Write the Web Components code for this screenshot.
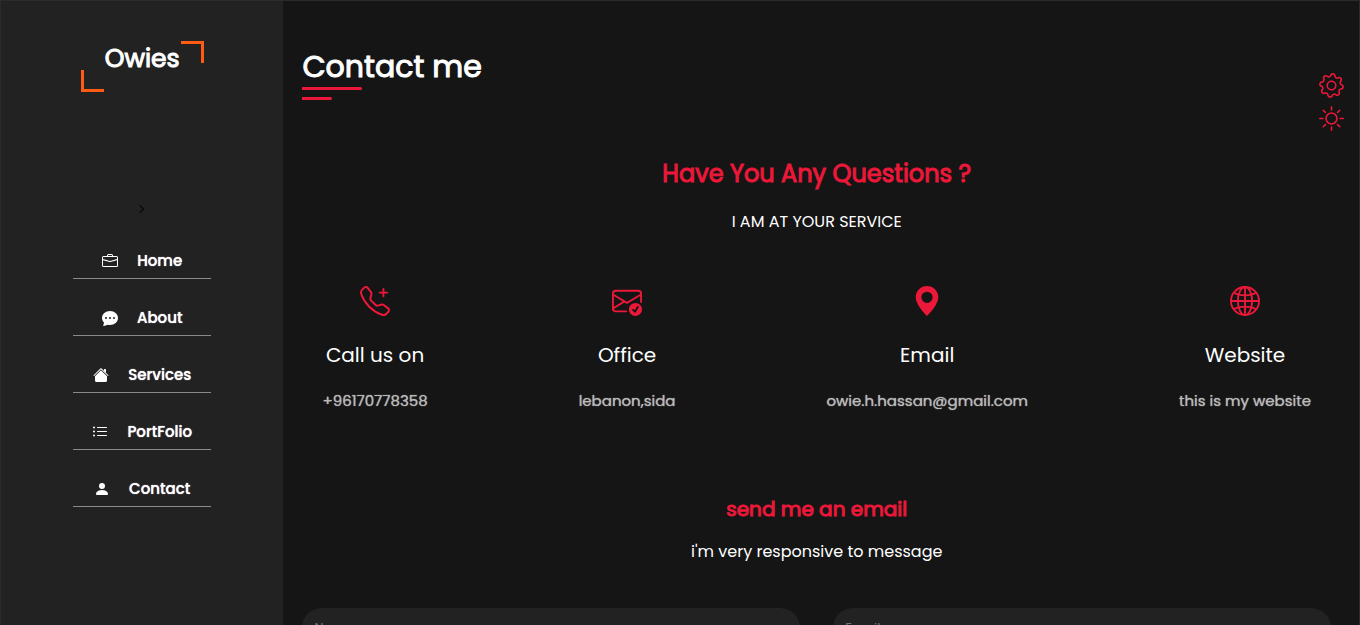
<!DOCTYPE html>
<html lang="en">
<head>
<meta charset="utf-8">
<meta name="viewport" content="width=device-width, initial-scale=1">
<title>Owies – Contact</title>
<style>
  html { scrollbar-width: none; }
  body {
    margin: 0;
    background: #151515;
    color: #fff;
    font-family: Poppins, Inter, sans-serif;
    --accent: #ec1839;
    --brand: #ff5b12;
    --panel: #222;
    --edge: #2b2b2b;
  }
</style>
</head>
<body>
<portfolio-page>
  <side-bar slot="side"></side-bar>
  <contact-section>
    <info-card icon="phone" heading="Call us on">+96170778358</info-card>
    <info-card icon="mail" heading="Office">lebanon,sida</info-card>
    <info-card icon="pin" heading="Email">owie.h.hassan@gmail.com</info-card>
    <info-card icon="globe" heading="Website">this is my website</info-card>
  </contact-section>
  <theme-tools slot="tools"></theme-tools>
</portfolio-page>

<script>
const ICONS = {
  briefcase: '<path d="M6.5 1A1.5 1.5 0 0 0 5 2.5V3H1.5A1.5 1.5 0 0 0 0 4.5v8A1.5 1.5 0 0 0 1.5 14h13a1.5 1.5 0 0 0 1.5-1.5v-8A1.5 1.5 0 0 0 14.5 3H11v-.5A1.5 1.5 0 0 0 9.5 1h-3zm0 1h3a.5.5 0 0 1 .5.5V3H6v-.5a.5.5 0 0 1 .5-.5zm1.886 6.914L15 7.151V12.5a.5.5 0 0 1-.5.5h-13a.5.5 0 0 1-.5-.5V7.15l6.614 1.764a1.5 1.5 0 0 0 .772 0zM1.5 4h13a.5.5 0 0 1 .5.5v1.616L8.129 7.948a.5.5 0 0 1-.258 0L1 6.116V4.5a.5.5 0 0 1 .5-.5z"/>',
  chat: '<path d="M16 8c0 3.866-3.582 7-8 7a9.06 9.06 0 0 1-2.347-.306c-.584.296-1.925.864-4.181 1.234-.2.032-.352-.176-.273-.362.354-.836.674-1.95.77-2.966C.744 11.37 0 9.76 0 8c0-3.866 3.582-7 8-7s8 3.134 8 7zM5 8a1 1 0 1 0-2 0 1 1 0 0 0 2 0zm4 0a1 1 0 1 0-2 0 1 1 0 0 0 2 0zm3 1a1 1 0 1 0 0-2 1 1 0 0 0 0 2z"/>',
  house: '<path d="m8 3.293 6 6V13.5a1.5 1.5 0 0 1-1.5 1.5h-9A1.5 1.5 0 0 1 2 13.5V9.293l6-6zm5-.793V6l-2-2V2.5a.5.5 0 0 1 .5-.5h1a.5.5 0 0 1 .5.5z"/><path d="M7.293 1.5a1 1 0 0 1 1.414 0l6.647 6.646a.5.5 0 0 1-.708.708L8 2.207 1.354 8.854a.5.5 0 1 1-.708-.708L7.293 1.5z"/>',
  list: '<path d="M5.500 3.500h9M5.500 7.500h9M5.500 11.500h9" fill="none" stroke="currentColor" stroke-linecap="round"/><circle cx="2" cy="3.500" r="1"/><circle cx="2" cy="7.500" r="1"/><circle cx="2" cy="11.500" r="1"/>',
  person: '<path d="M3 14s-1 0-1-1 1-4 6-4 6 3 6 4-1 1-1 1H3zm5-6a3 3 0 1 0 0-6 3 3 0 0 0 0 6z"/>',
  chevron: '<path d="M5 3l5 5-5 5" fill="none" stroke="currentColor" stroke-width="2"/>',
  phone: '<path d="M3.654 1.328a.678.678 0 0 0-1.015-.063L1.605 2.3c-.483.484-.661 1.169-.45 1.77a17.568 17.568 0 0 0 4.168 6.608 17.569 17.569 0 0 0 6.608 4.168c.601.211 1.286.033 1.77-.45l1.034-1.034a.678.678 0 0 0-.063-1.015l-2.307-1.794a.678.678 0 0 0-.58-.122l-2.19.547a1.745 1.745 0 0 1-1.657-.459L5.482 8.062a1.745 1.745 0 0 1-.46-1.657l.548-2.19a.678.678 0 0 0-.122-.58L3.654 1.328zM1.884.511a1.745 1.745 0 0 1 2.612.163L6.29 2.98c.329.423.445.974.315 1.494l-.547 2.19a.678.678 0 0 0 .178.643l2.457 2.457a.678.678 0 0 0 .644.178l2.189-.547a1.745 1.745 0 0 1 1.494.315l2.306 1.794c.829.645.905 1.87.163 2.611l-1.034 1.034c-.74.74-1.846 1.065-2.877.702a18.634 18.634 0 0 1-7.01-4.42 18.634 18.634 0 0 1-4.42-7.009c-.362-1.03-.037-2.137.703-2.877L1.885.511z"/><path d="M12.5 1a.5.5 0 0 1 .5.5V3h1.500a.5.5 0 0 1 0 1H13v1.500a.5.5 0 0 1-1 0V4h-1.500a.5.5 0 0 1 0-1H12V1.500a.5.5 0 0 1 .5-.5z"/>',
  mail: '<path d="M2 2a2 2 0 0 0-2 2v8.01A2 2 0 0 0 2 14h5.5a.5.5 0 0 0 0-1H2a1 1 0 0 1-.966-.741l5.64-3.471L8 9.583l7-4.2V8.5a.5.5 0 0 0 1 0V4a2 2 0 0 0-2-2H2Zm3.708 6.208L1 11.105V5.383l4.708 2.825ZM1 4.217V4a1 1 0 0 1 1-1h12a1 1 0 0 1 1 1v.217l-7 4.2-7-4.2Z"/><path d="M16 12.5a3.5 3.5 0 1 1-7 0 3.5 3.5 0 0 1 7 0Zm-1.993-1.679a.5.5 0 0 0-.686.172l-1.17 1.95-.547-.547a.5.5 0 0 0-.708.708l.774.773a.75.75 0 0 0 1.174-.144l1.335-2.226a.5.5 0 0 0-.172-.686Z"/>',
  pin: '<path d="M8 16s6-5.686 6-10A6 6 0 0 0 2 6c0 4.314 6 10 6 10zm0-7a3 3 0 1 1 0-6 3 3 0 0 1 0 6z"/>',
  globe: '<g fill="none" stroke="currentColor"><circle cx="8" cy="8" r="7.500"/><ellipse cx="8" cy="8" rx="3.800" ry="7.500"/><path d="M8 .5v15M.5 8h15M2.200 3.600C4 4.800 6 5 8 5s4-.2 5.800-1.400M2.200 12.400C4 11.200 6 11 8 11s4 .2 5.800 1.400"/></g>',
  gear: '<g transform="rotate(8 8 8)"><path d="M8 4.754a3.246 3.246 0 1 0 0 6.492 3.246 3.246 0 0 0 0-6.492zM5.754 8a2.246 2.246 0 1 1 4.492 0 2.246 2.246 0 0 1-4.492 0z"/><path d="M9.796 1.343c-.527-1.79-3.065-1.79-3.592 0l-.094.319a.873.873 0 0 1-1.255.52l-.292-.16c-1.64-.892-3.433.902-2.54 2.541l.159.292a.873.873 0 0 1-.52 1.255l-.319.094c-1.79.527-1.79 3.065 0 3.592l.319.094a.873.873 0 0 1 .52 1.255l-.16.292c-.892 1.64.901 3.434 2.541 2.54l.292-.159a.873.873 0 0 1 1.255.52l.094.319c.527 1.79 3.065 1.79 3.592 0l.094-.319a.873.873 0 0 1 1.255-.52l.292.16c1.64.893 3.434-.902 2.54-2.541l-.159-.292a.873.873 0 0 1 .52-1.255l.319-.094c1.79-.527 1.79-3.065 0-3.592l-.319-.094a.873.873 0 0 1-.52-1.255l.16-.292c.893-1.64-.902-3.433-2.541-2.54l-.292.159a.873.873 0 0 1-1.255-.52l-.094-.319zm-2.633.283c.246-.835 1.428-.835 1.674 0l.094.319a1.873 1.873 0 0 0 2.693 1.115l.291-.16c.764-.415 1.6.42 1.184 1.185l-.159.292a1.873 1.873 0 0 0 1.116 2.692l.318.094c.835.246.835 1.428 0 1.674l-.319.094a1.873 1.873 0 0 0-1.115 2.693l.16.291c.415.764-.42 1.6-1.185 1.184l-.291-.159a1.873 1.873 0 0 0-2.693 1.116l-.094.318c-.246.835-1.428.835-1.674 0l-.094-.319a1.873 1.873 0 0 0-2.692-1.115l-.292.16c-.764.415-1.6-.42-1.184-1.185l.159-.291A1.873 1.873 0 0 0 1.945 8.93l-.319-.094c-.835-.246-.835-1.428 0-1.674l.319-.094A1.873 1.873 0 0 0 3.06 4.377l-.16-.292c-.415-.764.42-1.6 1.185-1.184l.292.159a1.873 1.873 0 0 0 2.692-1.115l.094-.319z"/></g>',
  sun: '<g fill="none" stroke="currentColor" stroke-linecap="round"><circle cx="8" cy="8" r="3.500"/><path d="M8 .5v2M8 13.500v2M.5 8h2M13.500 8h2M2.700 2.700l1.400 1.400M11.900 11.900l1.400 1.400M2.700 13.300l1.400-1.400M11.900 4.100l1.400-1.400"/></g>'
};

function render(host, css, html) {
  const t = document.createElement('template');
  t.innerHTML = `<style>*{box-sizing:border-box}${css}</style>${html}`;
  host.attachShadow({ mode: 'open' }).append(t.content.cloneNode(true));
}

customElements.define('ui-icon', class extends HTMLElement {
  connectedCallback() {
    if (this.shadowRoot) return;
    render(this, `
      :host { display: block; flex: none; width: var(--size, 16px); height: var(--size, 16px); }
      svg { display: block; width: 100%; height: 100%; overflow: visible; }
    `, `<svg viewBox="0 0 16 16" fill="currentColor" aria-hidden="true">${ICONS[this.getAttribute('name')]}</svg>`);
  }
});

customElements.define('portfolio-page', class extends HTMLElement {
  constructor() {
    super();
    render(this, `
      :host {
        display: grid; grid-template-columns: minmax(220px, 20.8%) 1fr;
        min-height: 100vh; box-sizing: border-box;
        border: 1px solid var(--edge); border-bottom: 0;
      }
      main { min-width: 0; }
    `, `<slot name="side"></slot><main><slot></slot></main><slot name="tools"></slot>`);
  }
});

customElements.define('site-logo', class extends HTMLElement {
  constructor() {
    super();
    render(this, `
      :host { display: block; }
      a {
        display: block; position: relative; padding: 0 24px 15px;
        color: #fff; text-decoration: none; -webkit-text-stroke: 1px;
        font-size: 25px; font-weight: 400; line-height: 36px;
      }
      a::before, a::after { content: ""; position: absolute; box-sizing: border-box; width: 23px; height: 22px; }
      a::before { right: 0; top: 0; border: solid var(--brand); border-width: 3px 3px 0 0; }
      a::after { left: 0; bottom: 0; border: solid var(--brand); border-width: 0 0 3px 3px; }
    `, `<a href="#home"><slot></slot></a>`);
  }
});

customElements.define('nav-item', class extends HTMLElement {
  connectedCallback() {
    if (this.shadowRoot) return;
    render(this, `
      :host { display: block; }
      a {
        display: flex; align-items: center; justify-content: center; gap: 19px;
        padding-bottom: 5px; border-bottom: 1px solid #8a8a8a;
        color: #fff; text-decoration: none; text-shadow: 0 0 1px;
        font-size: 15px; font-weight: 500; line-height: 24px;
      }
    `, `<a href="${this.getAttribute('href')}"><ui-icon name="${this.getAttribute('icon')}"></ui-icon><span><slot></slot></span></a>`);
  }
});

customElements.define('side-bar', class extends HTMLElement {
  constructor() {
    super();
    render(this, `
      :host {
        display: flex; flex-direction: column; align-items: center;
        background: var(--panel); padding: 40px 24px;
      }
      button {
        margin: 111px 0 34px; padding: 0; border: 0; background: none;
        color: #0c0c0c; --size: 12px;
      }
      nav { display: grid; gap: 27px; width: 59%; max-width: 180px; min-width: 138px; }
    `, `
      <site-logo>Owies</site-logo>
      <button type="button" aria-label="Toggle menu"><ui-icon name="chevron"></ui-icon></button>
      <nav aria-label="Main">
        <nav-item icon="briefcase" href="#home">Home</nav-item>
        <nav-item icon="chat" href="#about">About</nav-item>
        <nav-item icon="house" href="#services">Services</nav-item>
        <nav-item icon="list" href="#portfolio">PortFolio</nav-item>
        <nav-item icon="person" href="#contact">Contact</nav-item>
      </nav>`);
  }
});

customElements.define('page-title', class extends HTMLElement {
  constructor() {
    super();
    render(this, `
      :host { display: block; }
      h1 { margin: 0; font-size: 30px; font-weight: 400; line-height: 40px; -webkit-text-stroke: 1px; }
      i { display: block; width: 60px; height: 3px; border-radius: 0 2px 2px 0; background: var(--accent); }
      i + i { width: 30px; margin-top: 7px; }
    `, `<h1><slot></slot></h1><i></i><i></i>`);
  }
});

customElements.define('info-card', class extends HTMLElement {
  connectedCallback() {
    if (this.shadowRoot) return;
    render(this, `
      :host { display: flex; flex-direction: column; align-items: center; padding: 0 20px; text-align: center; }
      ui-icon { --size: 30px; color: var(--accent); }
      h3 { margin: 24px 0 19px; font-size: 20px; font-weight: 400; line-height: 30px; }
      p { margin: 0; font-size: 15px; line-height: 24px; color: #b9b9b9; text-shadow: 0 0 1px; }
    `, `<ui-icon name="${this.getAttribute('icon')}"></ui-icon><h3>${this.getAttribute('heading')}</h3><p><slot></slot></p>`);
  }
});

customElements.define('text-field', class extends HTMLElement {
  connectedCallback() {
    if (this.shadowRoot) return;
    const label = this.getAttribute('label');
    render(this, `
      :host { display: block; }
      input {
        display: block; width: 100%; height: 40px; padding: 0 12px;
        border: 0; border-radius: 20px; background: var(--panel);
        color: #fff; font: 400 13px/20px Poppins, Inter, sans-serif; outline: 0;
      }
      input::placeholder { color: #757575; opacity: 1; }
    `, `<input type="${this.getAttribute('type')}" placeholder="${label}" aria-label="${label}">`);
  }
});

customElements.define('contact-section', class extends HTMLElement {
  constructor() {
    super();
    render(this, `
      :host { display: block; padding: 46px 28px 40px 19px; text-align: center; }
      page-title { text-align: left; }
      h2, h3, p { margin: 0; }
      h2, h3 { color: var(--accent); font-weight: 400; -webkit-text-stroke: 1px; }
      h2 { margin-top: 56px; font-size: 24px; line-height: 36px; }
      h3 { margin-top: 81px; font-size: 20px; line-height: 30px; }
      p { font-size: 16px; line-height: 24px; }
      h2 + p { margin-top: 18px; }
      h3 + p { margin-top: 16px; }
      .cards { display: flex; justify-content: space-between; margin-top: 52px; }
      form { display: grid; grid-template-columns: 1fr 1fr; gap: 33px; margin-top: 44px; }
    `, `
      <page-title>Contact me</page-title>
      <h2>Have You Any Questions ?</h2>
      <p>I AM AT YOUR SERVICE</p>
      <div class="cards"><slot></slot></div>
      <h3>send me an email</h3>
      <p>i'm very responsive to message</p>
      <form>
        <text-field type="text" label="Name"></text-field>
        <text-field type="email" label="Email"></text-field>
      </form>`);
  }
});

customElements.define('theme-tools', class extends HTMLElement {
  constructor() {
    super();
    render(this, `
      :host { position: fixed; top: 73px; right: 16px; display: grid; gap: 8px; }
      button { padding: 0; border: 0; background: none; color: var(--accent); --size: 25px; }
    `, `
      <button type="button" aria-label="Settings"><ui-icon name="gear"></ui-icon></button>
      <button type="button" aria-label="Light mode"><ui-icon name="sun"></ui-icon></button>`);
  }
});
</script>
</body>
</html>
